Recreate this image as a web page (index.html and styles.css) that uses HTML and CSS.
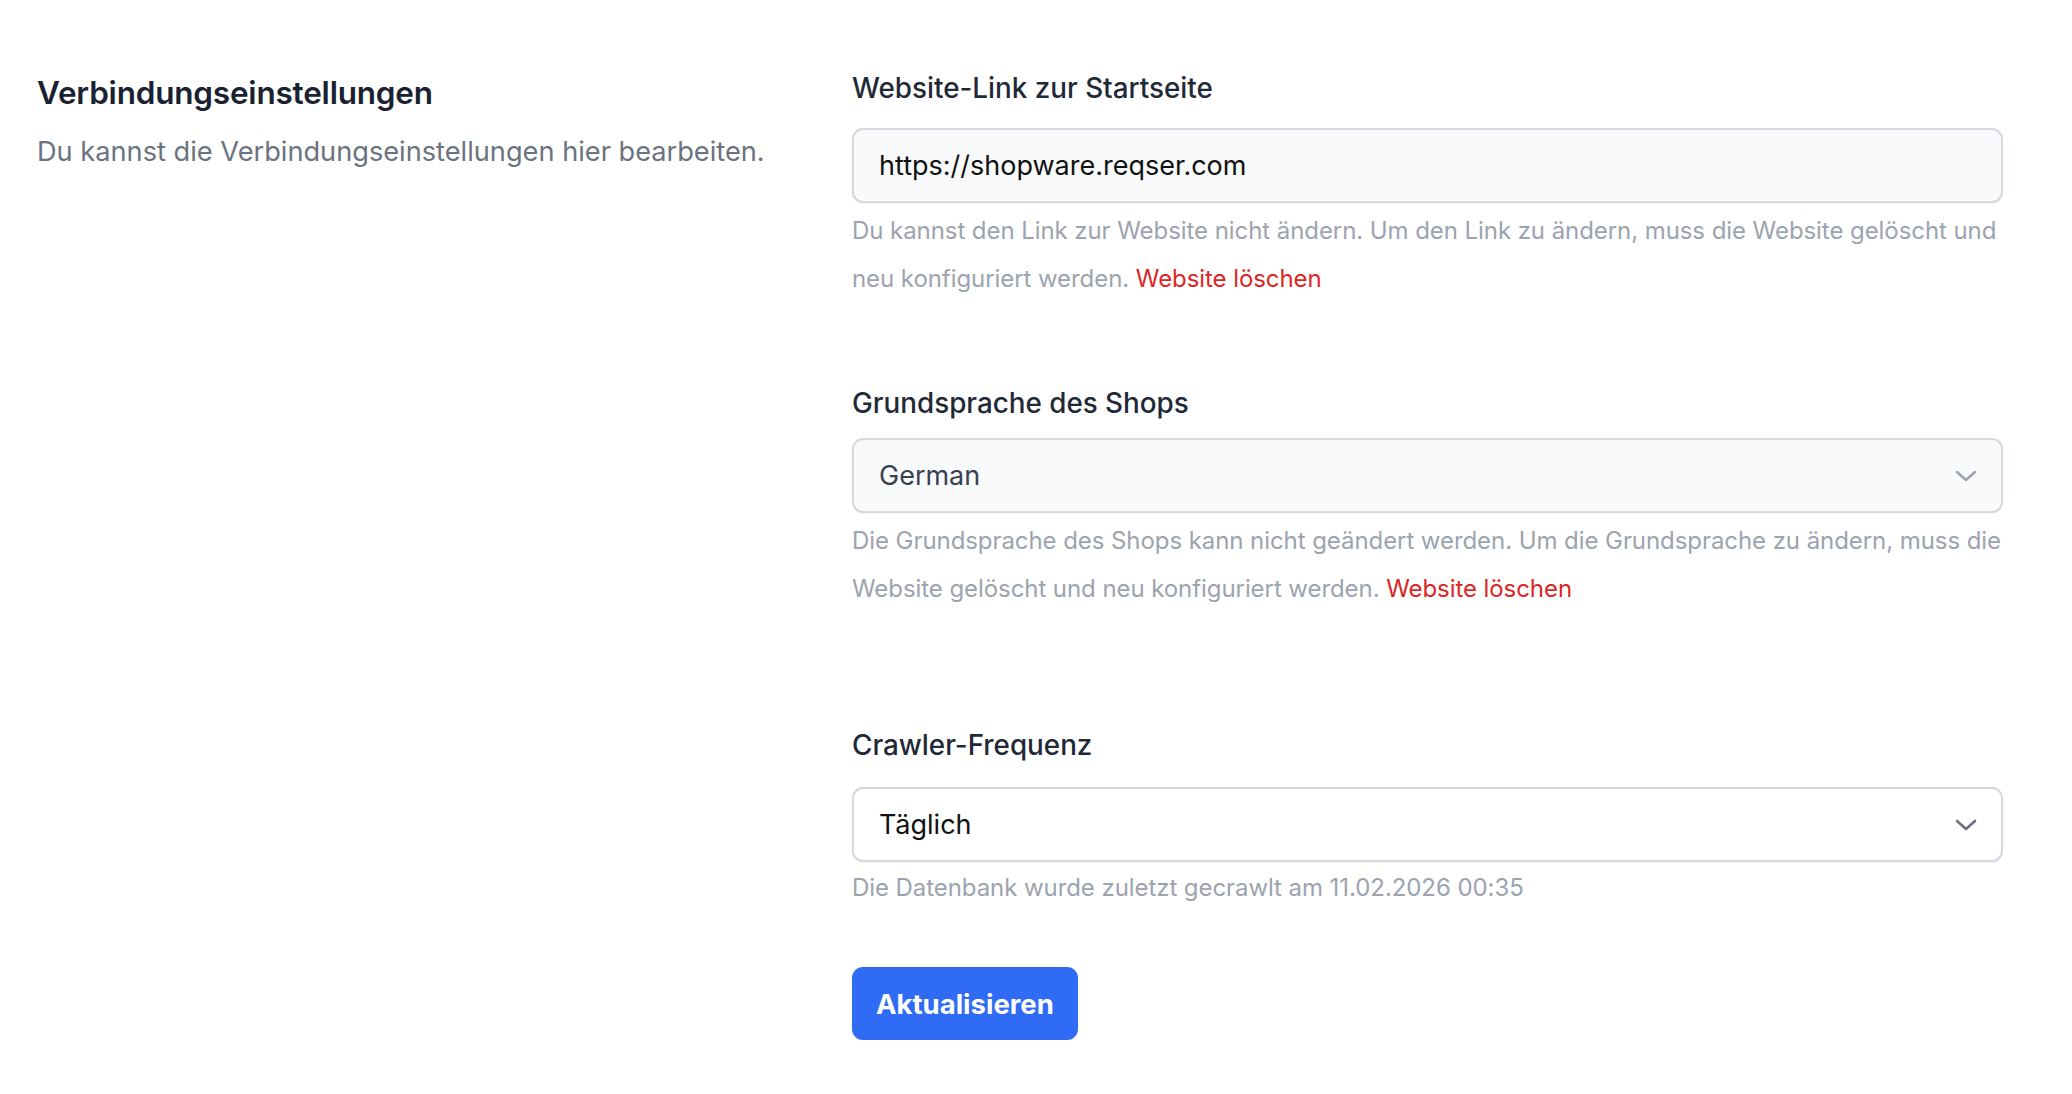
FILE: index.html
```html
<!DOCTYPE html>
<html lang="de">
<head>
<meta charset="utf-8">
<title>Verbindungseinstellungen</title>
<link rel="stylesheet" href="styles.css">
</head>
<body>
<main class="page">
  <section class="intro">
    <h2 class="intro-title">Verbindungseinstellungen</h2>
    <p class="intro-text">Du kannst die Verbindungseinstellungen hier bearbeiten.</p>
  </section>
  <form class="fields">
    <div class="field">
      <label class="field-label">Website-Link zur Startseite</label>
      <div class="control control-disabled control-url">https://shopware.reqser.com</div>
      <p class="hint">Du kannst den Link zur Website nicht ändern. Um den Link zu ändern, muss die Website gelöscht und neu konfiguriert werden. <a class="danger-link" href="#">Website löschen</a></p>
    </div>
    <div class="field field-lang">
      <label class="field-label">Grundsprache des Shops</label>
      <div class="control control-disabled control-select">
        <span class="value value-muted">German</span>
        <svg class="chevron chevron-muted" width="22" height="12" viewBox="0 0 22 12"><path d="M2 2 L11 10 L20 2" fill="none" stroke="currentColor" stroke-width="2.4" stroke-linecap="round" stroke-linejoin="round"/></svg>
      </div>
      <p class="hint">Die Grundsprache des Shops kann nicht geändert werden. Um die Grundsprache zu ändern, muss die Website gelöscht und neu konfiguriert werden. <a class="danger-link" href="#">Website löschen</a></p>
    </div>
    <div class="field field-crawl">
      <label class="field-label">Crawler-Frequenz</label>
      <div class="control control-select">
        <span class="value">Täglich</span>
        <svg class="chevron" width="22" height="12" viewBox="0 0 22 12"><path d="M2 2 L11 10 L20 2" fill="none" stroke="currentColor" stroke-width="2.6" stroke-linecap="round" stroke-linejoin="round"/></svg>
      </div>
      <p class="hint hint-single">Die Datenbank wurde zuletzt gecrawlt am 11.02.2026 00:35</p>
    </div>
    <div class="actions">
      <button type="button" class="btn-primary">Aktualisieren</button>
    </div>
  </form>
</main>
</body>
</html>
```

FILE: styles.css
```css
* { box-sizing: border-box; }

html, body {
  margin: 0;
  padding: 0;
  background: #ffffff;
}

body {
  font-family: Inter, "Noto Sans", "Liberation Sans", sans-serif;
  color: #1f2937;
  -webkit-font-smoothing: antialiased;
}

.page {
  display: grid;
  grid-template-columns: 1fr 1151px;
  padding: 68px 69px 0 37px;
}

.intro {
  padding-top: 5px;
}

.intro-title {
  margin: 0;
  font-size: 31.5px;
  line-height: 40px;
  font-weight: 600;
  color: #1a2232;
  letter-spacing: -0.2px;
}

.intro-text {
  margin: 19px 0 0;
  font-size: 27.2px;
  line-height: 40px;
  color: #6b7280;
}

.fields {
  display: flex;
  flex-direction: column;
}

.field {
  display: flex;
  flex-direction: column;
}

.field-label {
  font-size: 27.8px;
  line-height: 40px;
  font-weight: 500;
  color: #1f2937;
  margin-bottom: 20px;
}

.control {
  height: 75px;
  border: 2px solid #d5d8de;
  border-radius: 11px;
  background: #ffffff;
  box-shadow: 0 1px 2px rgba(0, 0, 0, 0.05);
  display: flex;
  align-items: center;
  padding: 0 26px 0 25px;
  font-size: 27px;
  color: #111111;
}

.control-disabled {
  background: #f9fafb;
}

.control-select {
  justify-content: space-between;
}

.value-muted {
  color: #374151;
}

.chevron {
  color: #6b7280;
  margin-right: -2px;
}

.chevron-muted {
  color: #9ca3af;
}

.hint {
  margin: 4px 0 0;
  font-size: 24px;
  line-height: 48px;
  letter-spacing: -0.07px;
  color: #9ca3af;
}

.danger-link {
  color: #dc2626;
  text-decoration: none;
}

.field-lang {
  margin-top: 80px;
}

.field-lang .field-label {
  margin-bottom: 15px;
}

.field-crawl {
  margin-top: 112px;
}

.field-crawl .field-label {
  margin-bottom: 22px;
}

.hint-single {
  margin-top: 2px;
}

.actions {
  margin-top: 55px;
}

.btn-primary {
  font-family: Inter, "Noto Sans", "Liberation Sans", sans-serif;
  font-size: 27.5px;
  font-weight: 700;
  line-height: 32px;
  color: #ffffff;
  background: #2f6bf5;
  border: none;
  border-radius: 11px;
  height: 73px;
  padding: 0 24px;
  box-shadow: 0 1px 2px rgba(0, 0, 0, 0.08);
  cursor: pointer;
}
```
